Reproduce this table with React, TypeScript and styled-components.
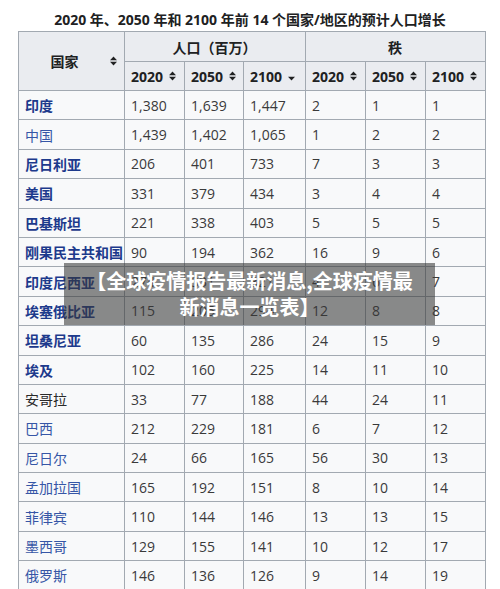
import React from "react";
import styled, { createGlobalStyle } from "styled-components";

const GlobalStyle = createGlobalStyle`
  html, body { margin: 0; padding: 0; background: #ffffff; }
  body { font-family: "Open Sans", "Noto Sans CJK SC", sans-serif; color: #202122; }
`;

const Page = styled.div`
  width: 500px;
  height: 589px;
  overflow: hidden;
  position: relative;
  background: #ffffff;
`;

const Title = styled.div`
  padding-top: 10px;
  height: 21px;
  line-height: 20px;
  font-size: 14px;
  font-weight: 700;
  text-align: center;
  color: #202122;
  box-sizing: border-box;
  height: 31px;
`;

const Table = styled.table`
  margin-left: 18px;
  width: 467px;
  border-collapse: collapse;
  table-layout: fixed;
  background: #f8f9fa;
  font-size: 14px;
`;

const HeadCell = styled.th<{ $h: number }>`
  background: #eaecf0;
  border: 1px solid #a2a9b1;
  height: ${(p) => p.$h}px;
  padding: 0 7px 0 6px;
  font-weight: 700;
  color: #202122;
  text-align: center;
  box-sizing: border-box;
  white-space: nowrap;
`;

const SortHead = styled.span`
  display: flex;
  align-items: center;
  gap: 6px;
`;

const HeadLabel = styled.span<{ $center?: boolean }>`
  flex: ${(p) => (p.$center ? 1 : "none")};
  text-align: ${(p) => (p.$center ? "center" : "left")};
`;

const Row = styled.tr`
  height: 29.4px;
`;

const Cell = styled.td`
  border: 1px solid #a2a9b1;
  padding: 0 6px;
  color: #3a3a3a;
  white-space: nowrap;
  overflow: hidden;
`;

const Country = styled.span<{ $bold?: boolean; $plain?: boolean }>`
  color: ${(p) => (p.$plain ? "#2a2a2a" : p.$bold ? "#1d3a8c" : "#3656a6")};
  font-weight: ${(p) => (p.$bold ? 700 : 400)};
`;

const Overlay = styled.div`
  position: absolute;
  left: 64px;
  top: 263px;
  width: 371px;
  height: 62px;
  box-sizing: border-box;
  padding-top: 5px;
  background: rgba(55, 55, 55, 0.58);
  color: #ffffff;
  font-family: "Noto Sans CJK SC", sans-serif;
  font-weight: 700;
  font-size: 20px;
  line-height: 26px;
  text-align: center;
`;

const SortIcon = ({ down }: { down?: boolean }) => (
  <svg width="7" height="10" viewBox="0 0 7 10" style={{ flex: "none" }}>
    {!down && <polygon points="0,4.2 3.5,0.5 7,4.2" fill="#202122" />}
    <polygon points="0,5.8 7,5.8 3.5,9.5" fill="#202122" />
  </svg>
);

type R = [string, string, string, string, string, string, string, "b" | "n" | "p"];

const rows: R[] = [
  ["印度", "1,380", "1,639", "1,447", "2", "1", "1", "b"],
  ["中国", "1,439", "1,402", "1,065", "1", "2", "2", "n"],
  ["尼日利亚", "206", "401", "733", "7", "3", "3", "b"],
  ["美国", "331", "379", "434", "3", "4", "4", "b"],
  ["巴基斯坦", "221", "338", "403", "5", "5", "5", "b"],
  ["刚果民主共和国", "90", "194", "362", "16", "9", "6", "b"],
  ["印度尼西亚", "274", "331", "321", "4", "6", "7", "b"],
  ["埃塞俄比亚", "115", "205", "294", "12", "8", "8", "b"],
  ["坦桑尼亚", "60", "135", "286", "24", "15", "9", "b"],
  ["埃及", "102", "160", "225", "14", "11", "10", "b"],
  ["安哥拉", "33", "77", "188", "44", "24", "11", "p"],
  ["巴西", "212", "229", "181", "6", "7", "12", "n"],
  ["尼日尔", "24", "66", "165", "56", "30", "13", "n"],
  ["孟加拉国", "165", "192", "151", "8", "10", "14", "n"],
  ["菲律宾", "110", "144", "146", "13", "13", "15", "n"],
  ["墨西哥", "129", "155", "141", "10", "12", "17", "n"],
  ["俄罗斯", "146", "136", "126", "9", "14", "19", "n"],
];

const widths = [106, 60, 59, 62, 60, 60, 60];

export default function App() {
  return (
    <Page>
      <GlobalStyle />
      <Title>2020 年、2050 年和 2100 年前 14 个国家/地区的预计人口增长</Title>
      <Table>
        <colgroup>
          {widths.map((w, i) => (
            <col key={i} style={{ width: w }} />
          ))}
        </colgroup>
        <thead>
          <tr>
            <HeadCell $h={30} rowSpan={2}>
              <SortHead>
                <HeadLabel $center>国家</HeadLabel>
                <SortIcon />
              </SortHead>
            </HeadCell>
            <HeadCell $h={30} colSpan={3}>人口（百万）</HeadCell>
            <HeadCell $h={30} colSpan={3}>秩</HeadCell>
          </tr>
          <tr>
            {["2020", "2050", "2100", "2020", "2050", "2100"].map((y, i) => (
              <HeadCell $h={29} key={i}>
                <SortHead>
                  <HeadLabel>{y}</HeadLabel>
                  <SortIcon down={i === 2} />
                </SortHead>
              </HeadCell>
            ))}
          </tr>
        </thead>
        <tbody>
          {rows.map((r) => (
            <Row key={r[0]}>
              <Cell>
                <Country $bold={r[7] === "b"} $plain={r[7] === "p"}>
                  {r[0]}
                </Country>
              </Cell>
              {r.slice(1, 7).map((v, i) => (
                <Cell key={i}>{v}</Cell>
              ))}
            </Row>
          ))}
        </tbody>
      </Table>
      <Overlay>
        【全球疫情报告最新消息,全球疫情最
        <br />
        新消息一览表】
      </Overlay>
    </Page>
  );
}
